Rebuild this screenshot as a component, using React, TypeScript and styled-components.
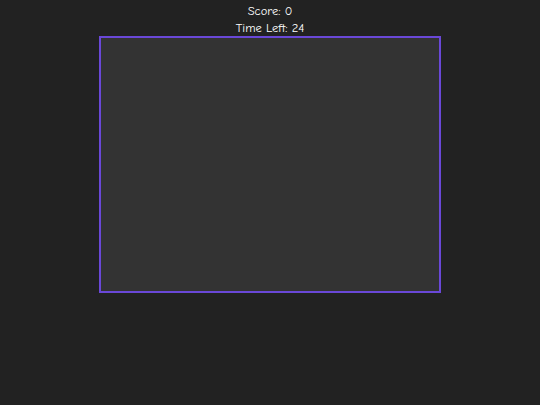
import React from "react";
import styled, { createGlobalStyle } from "styled-components";

const Global = createGlobalStyle`
  html, body { margin: 0; padding: 0; background: #222222; }
  body { font-family: "Comic Sans MS", "Comic Neue", "DejaVu Sans", sans-serif; color: #ffffff; }
`;

const Page = styled.div`
  display: flex;
  flex-direction: column;
  align-items: center;
  padding-top: 2px;
`;

const Stat = styled.div`
  font-size: 12.5px;
  line-height: 18px;
  height: 17px;
`;

const Arena = styled.div`
  width: 338px;
  height: 253px;
  background: #333333;
  border: 2px solid #6a48d8;
`;

export default function App() {
  return (
    <>
      <Global />
      <Page>
        <Stat>Score: 0</Stat>
        <Stat>Time Left: 24</Stat>
        <Arena />
      </Page>
    </>
  );
}
